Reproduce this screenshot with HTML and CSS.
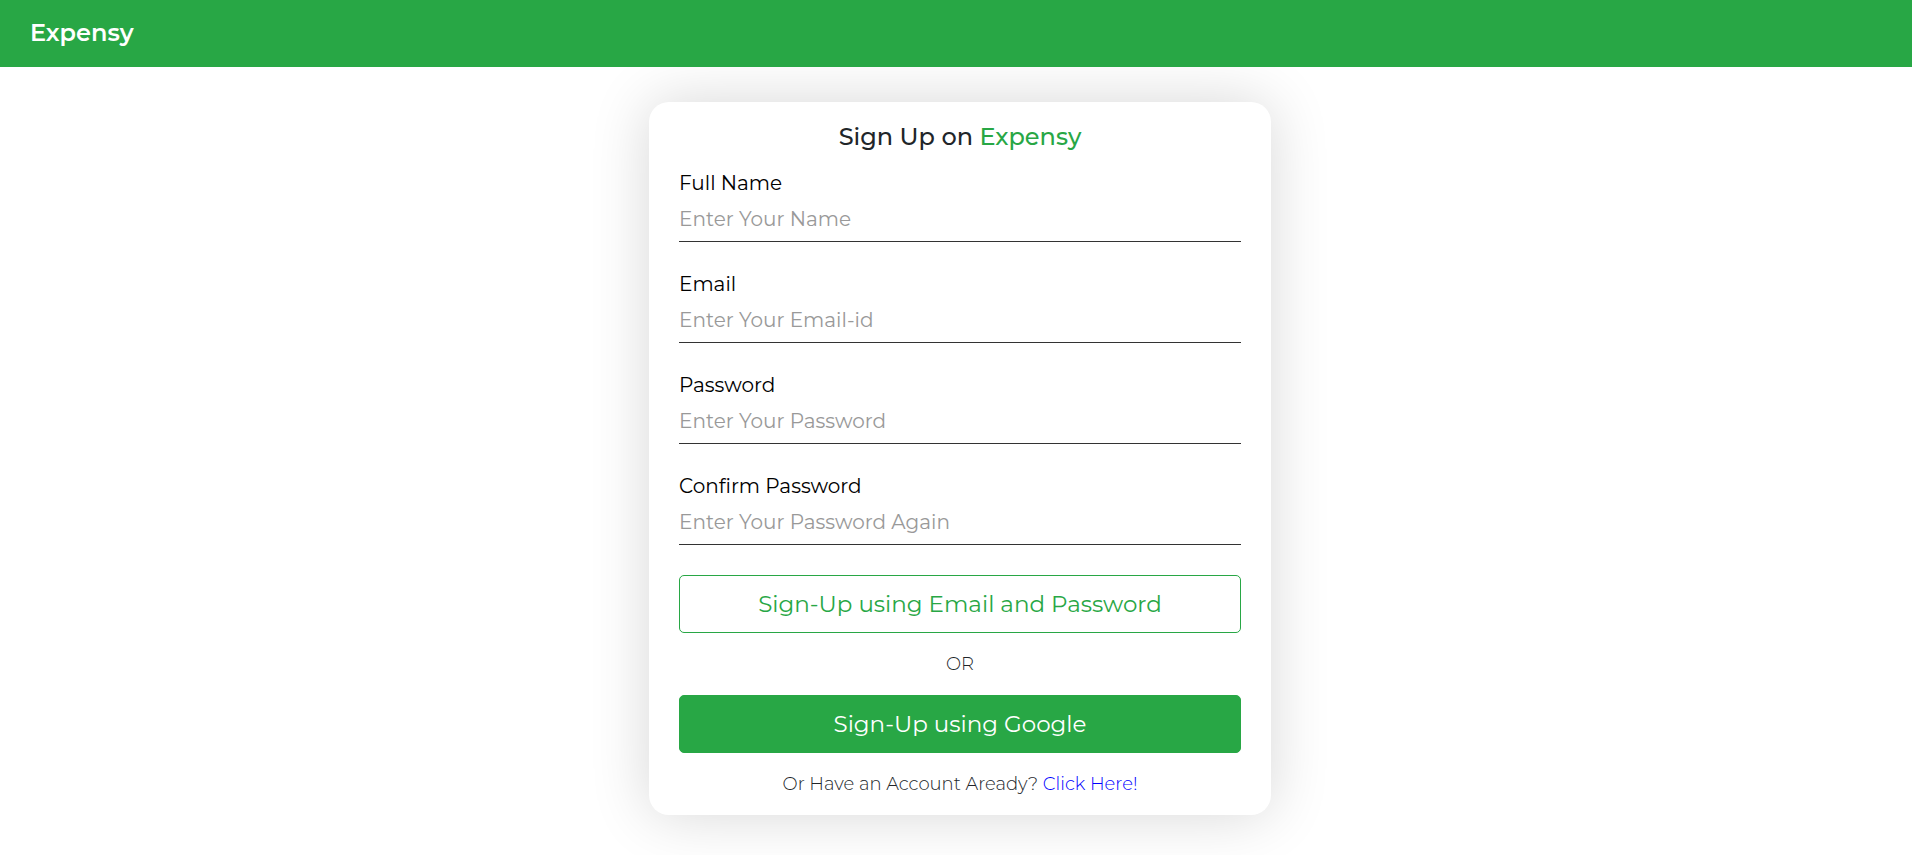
FILE: index.html
```html
<!DOCTYPE html>
<html lang="en">
<head>
<meta charset="utf-8">
<meta name="viewport" content="width=device-width, initial-scale=1">
<title>Expensy</title>
<link rel="stylesheet" href="styles.css">
</head>
<body>
<header class="navbar"><a class="brand" href="#">Expensy</a></header>
<main class="page">
<form class="card">
<h1 class="title">Sign Up on <span class="accent">Expensy</span></h1>
<div class="field"><label for="name">Full Name</label><input id="name" type="text" placeholder="Enter Your Name"></div>
<div class="field"><label for="email">Email</label><input id="email" type="email" placeholder="Enter Your Email-id"></div>
<div class="field"><label for="password">Password</label><input id="password" type="password" placeholder="Enter Your Password"></div>
<div class="field"><label for="confirm">Confirm Password</label><input id="confirm" type="password" placeholder="Enter Your Password Again"></div>
<button class="btn btn-outline" type="submit">Sign-Up using Email and Password</button>
<p class="note">OR</p>
<button class="btn btn-solid" type="button">Sign-Up using Google</button>
<p class="note">Or Have an Account Aready? <a class="link" href="#">Click Here!</a></p>
</form>
</main>
</body>
</html>
```
FILE: styles.css
```css
* { box-sizing: border-box; }
body { margin: 0; background: #fff; color: #000; font-family: Montserrat, Inter, sans-serif; font-size: 20px; line-height: 24px; }
.navbar { position: relative; z-index: 1; display: flex; align-items: center; padding: 17px 30px 18px; background: #28a745; }
.brand { color: #fff; font-size: 24px; font-weight: 600; line-height: 32px; text-decoration: none; }
.page { display: flex; justify-content: center; padding: 35px 16px 40px; margin-left: 8px; }
.card { display: flex; flex-direction: column; width: 100%; max-width: 622px; padding: 19px 30px 0; border-radius: 20px; background: #fff; box-shadow: 0 0 60px rgba(0, 0, 0, 0.16); }
.title { margin: 0 0 18px; color: #212529; font-size: 24px; font-weight: 500; line-height: 32px; text-align: center; }
.accent { color: #28a745; }
.field { display: flex; flex-direction: column; margin-bottom: 30px; }
.field input { width: 100%; height: 47px; padding: 2px 0 0; border: 0; border-bottom: 1px solid #333; background: transparent; color: #000; font: inherit; outline: 0; }
.field input::placeholder { color: #999; opacity: 1; }
.btn { height: 58px; border: 1px solid #28a745; border-radius: 5px; font: inherit; font-size: 23px; cursor: pointer; }
.btn-outline { background: #fff; color: #28a745; }
.btn-solid { background: #28a745; color: #fff; }
.note { margin: 19px 0; color: #212529; font-size: 18px; font-weight: 300; text-align: center; }
.link { color: #00f; text-decoration: none; }
```
